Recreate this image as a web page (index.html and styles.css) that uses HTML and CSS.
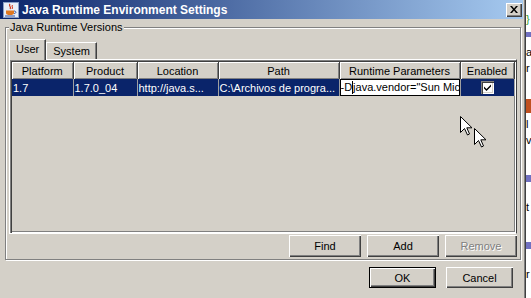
FILE: index.html
```html
<!DOCTYPE html>
<html lang="en">
<head>
  <meta charset="UTF-8" />
  <title>Java Runtime Environment Settings</title>
  <link rel="stylesheet" href="styles.css">
</head>
<body>
  <div class="screen">
    <div class="window">
      <div class="titlebar">
        <svg class="app-icon" width="16" height="16" viewBox="0 0 16 16">
          <rect x="0.5" y="0.5" width="15" height="15" fill="#e8eef8" stroke="#8aa0c8"/>
          <path d="M7 2 C5 4 9 5 7 7" fill="none" stroke="#d03010" stroke-width="1.2"/>
          <path d="M9.5 3 C8 4.5 10.5 5.5 9 7" fill="none" stroke="#d03010" stroke-width="1"/>
          <path d="M3 8.5 H11 V11 C11 12.5 9.5 13 7 13 C4.5 13 3 12.5 3 11 Z" fill="#e07820"/>
          <path d="M11 9 C13.5 9 13.5 11.5 11 11.5" fill="none" stroke="#3050a0" stroke-width="1"/>
          <path d="M2 14 H12" stroke="#3050a0" stroke-width="1"/>
        </svg>
        <div class="title">Java Runtime Environment Settings</div>
        <div class="close">
          <svg width="8" height="7" viewBox="0 0 8 7">
            <path d="M0 0 L2 0 L4 2.5 L6 0 L8 0 L5 3.5 L8 7 L6 7 L4 4.5 L2 7 L0 7 L3 3.5 Z" fill="#000"/>
          </svg>
        </div>
      </div>

      <div class="content">
        <fieldset class="group">
          <legend>Java Runtime Versions</legend>
          <div class="tabs">
            <div class="tab active">User</div>
            <div class="tab">System</div>
          </div>
          <div class="tabpanel">
            <div class="tablepane">
              <table class="grid">
                <colgroup>
                  <col style="width:61px">
                  <col style="width:64px">
                  <col style="width:81px">
                  <col style="width:121px">
                  <col style="width:121px">
                  <col style="width:54px">
                </colgroup>
                <thead>
                  <tr>
                    <th>Platform</th>
                    <th>Product</th>
                    <th>Location</th>
                    <th>Path</th>
                    <th>Runtime Parameters</th>
                    <th>Enabled</th>
                  </tr>
                </thead>
                <tbody>
                  <tr class="selected">
                    <td>1.7</td>
                    <td>1.7.0_04</td>
                    <td>http://java.s...</td>
                    <td>C:\Archivos de progra...</td>
                    <td class="editing"><div class="editor">-D<span class="caret"></span>java.vendor="Sun Mic</div></td>
                    <td class="check-cell">
                      <div class="checkbox">
                        <svg width="7" height="7" viewBox="0 0 7 7">
                          <path d="M0 2.5 L2.5 5 L7 0.5 V2.5 L2.5 7 L0 4.5 Z" fill="#000"/>
                        </svg>
                      </div>
                    </td>
                  </tr>
                </tbody>
              </table>
            </div>
          </div>
          <div class="row-buttons">
            <button class="btn">Find</button>
            <button class="btn">Add</button>
            <button class="btn" disabled>Remove</button>
          </div>
        </fieldset>
        <div class="dialog-buttons">
          <button class="btn small default">OK</button>
          <button class="btn small">Cancel</button>
        </div>
      </div>
    </div>

    <div class="desktop">
      <span class="frag green">}</span>
      <span class="frag purple"></span>
      <span class="frag text">a</span>
      <span class="frag text">r</span>
      <span class="frag orange"></span>
      <span class="frag text">l</span>
      <span class="frag text">v</span>
      <span class="frag purple tall"></span>
      <span class="frag text">t</span>
      <span class="frag purple tall"></span>
      <span class="frag text">r</span>
    </div>

    <svg class="cursor first" width="13" height="20" viewBox="0 0 13 20">
      <path d="M0.5 0.5 V16.5 L4.5 12.5 L7.5 19 L9.5 18 L6.8 11.8 H12 Z" fill="#fff" stroke="#000" stroke-width="1"/>
    </svg>
    <svg class="cursor second" width="13" height="20" viewBox="0 0 13 20">
      <path d="M0.5 0.5 V16.5 L4.5 12.5 L7.5 19 L9.5 18 L6.8 11.8 H12 Z" fill="#fff" stroke="#000" stroke-width="1"/>
    </svg>
  </div>
</body>
</html>
```

FILE: styles.css
```css
* {
  box-sizing: border-box;
}
body {
  margin: 0;
  background: #fff;
  font-family: "Liberation Sans", Arial, sans-serif;
  font-size: 11px;
  color: #000;
  overflow: hidden;
}
.screen {
  position: relative;
  display: flex;
  width: 531px;
  height: 298px;
}
.window {
  width: 526px;
  height: 298px;
  flex-shrink: 0;
  background: #d4d0c8;
  border-right: 1px solid #404040;
  box-shadow: inset -1px 0 0 #808080;
  padding-right: 2px;
  display: flex;
  flex-direction: column;
}
.titlebar {
  height: 19px;
  background: linear-gradient(to right, #0a246a, #a6caf0);
  display: flex;
  align-items: center;
  padding: 0 1px 0 3px;
  color: #fff;
  font-weight: bold;
  font-size: 12px;
}
.app-icon {
  margin-right: 3px;
}
.title {
  flex: 1;
  white-space: nowrap;
}
.close {
  width: 16px;
  height: 14px;
  background: #d4d0c8;
  box-shadow: inset 1px 1px #fff, inset -1px -1px #404040, inset -2px -2px #808080;
  display: flex;
  align-items: center;
  justify-content: center;
}
.content {
  padding: 2px 0 0 5px;
}
.group {
  margin: 0 2px 0 0;
  padding: 5px 3px 2px 3px;
  border: 1px solid #808080;
  box-shadow: inset 1px 1px #fff, 1px 1px #fff;
  min-width: 0;
}
.group legend {
  padding: 0 1px;
  line-height: 13px;
  background: #d4d0c8;
}
.tabs {
  display: flex;
  align-items: flex-end;
  height: 20px;
  position: relative;
  z-index: 1;
}
.tab {
  height: 17px;
  padding: 2px 6px 0 6px;
  border-top: 1px solid #fff;
  border-left: 1px solid #fff;
  border-right: 1px solid #404040;
  box-shadow: inset -1px 0 #808080;
  background: #d4d0c8;
}
.tab.active {
  height: 21px;
  margin-bottom: -1px;
  padding: 3px 6px 0 6px;
}
.tabpanel {
  height: 175px;
  border-top: 1px solid #fff;
  border-left: 1px solid #fff;
  border-right: 1px solid #404040;
  border-bottom: 1px solid #fff;
}
.tablepane {
  height: 100%;
  padding: 2px;
  box-shadow: inset 1px 1px #808080, inset 2px 2px #404040, inset -1px -1px #fff, inset -2px -2px #808080;
}
.grid {
  border-collapse: collapse;
  table-layout: fixed;
  width: 502px;
}
.grid th {
  height: 17px;
  padding: 0;
  font-weight: normal;
  text-align: center;
  background: #d4d0c8;
  box-shadow: inset 1px 1px #fff, inset -1px -1px #808080, inset -2px 0 #d4d0c8;
  border-right: 1px solid #404040;
  white-space: nowrap;
  overflow: hidden;
}
.grid td {
  height: 17px;
  padding: 0 0 0 1px;
  white-space: nowrap;
  overflow: hidden;
  border-right: 1px solid #a0a0a0;
}
.selected td {
  background: #0a246a;
  color: #fff;
}
.grid td.editing {
  padding: 0;
}
.editor {
  height: 17px;
  background: #fff;
  color: #000;
  border: 1px solid #000;
  padding: 1px 0 0 0;
  overflow: hidden;
  white-space: nowrap;
}
.caret {
  display: inline-block;
  width: 1px;
  height: 13px;
  background: #000;
  vertical-align: -3px;
}
.check-cell {
  text-align: center;
}
.checkbox {
  display: inline-flex;
  align-items: center;
  justify-content: center;
  width: 13px;
  height: 13px;
  background: #fff;
  vertical-align: middle;
  box-shadow: inset 1px 1px #808080, inset 2px 2px #404040, inset -1px -1px #fff, inset -2px -2px #d4d0c8;
}
.row-buttons {
  display: flex;
  justify-content: flex-end;
  gap: 6px;
  margin-top: 1px;
}
.btn {
  width: 72px;
  height: 22px;
  font-family: "Liberation Sans", Arial, sans-serif;
  font-size: 11px;
  color: #000;
  background: #d4d0c8;
  border: none;
  padding: 0;
  box-shadow: inset 1px 1px #fff, inset -1px -1px #404040, inset -2px -2px #808080;
}
.btn:disabled {
  color: #808080;
  text-shadow: 1px 1px #fff;
}
.dialog-buttons {
  display: flex;
  justify-content: flex-end;
  gap: 10px;
  margin: 7px 10px 0 0;
}
.btn.small {
  width: 67px;
  height: 21px;
}
.btn.default {
  border: 1px solid #000;
  box-shadow: inset 1px 1px #fff, inset -1px -1px #404040, inset -2px -2px #808080;
}
.desktop {
  flex: 1;
  display: flex;
  flex-direction: column;
  align-items: flex-start;
  padding-top: 14px;
  overflow: hidden;
}
.frag {
  display: block;
  font-size: 11px;
  line-height: 11px;
}
.frag.green {
  color: #30a030;
  height: 14px;
}
.frag.purple {
  width: 5px;
  height: 5px;
  background: #7070c0;
  margin: 4px 0 10px;
}
.frag.purple.tall {
  height: 7px;
  margin: 24px 0 20px;
}
.frag.text {
  height: 16px;
}
.frag.orange {
  width: 5px;
  height: 14px;
  background: #c05020;
  margin: 20px 0 6px;
}
.cursor {
  position: absolute;
}
.cursor.first {
  left: 460px;
  top: 116px;
}
.cursor.second {
  left: 474px;
  top: 128px;
}
```
